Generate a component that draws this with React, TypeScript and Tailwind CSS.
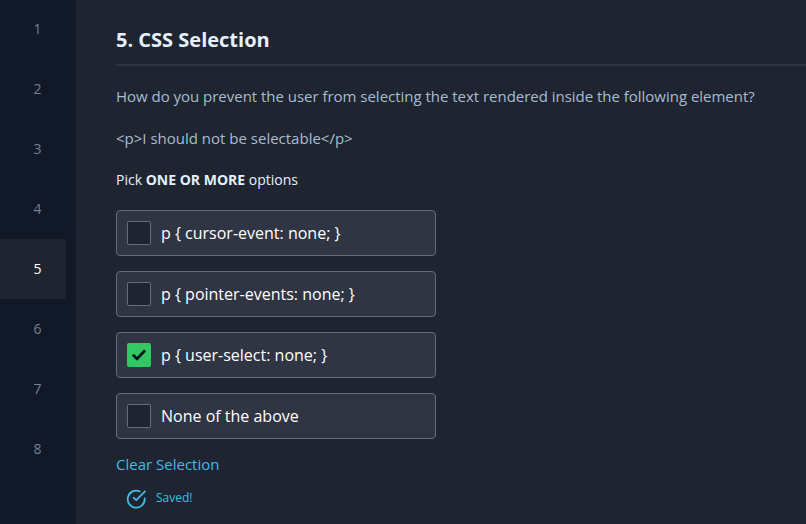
const questions = [1, 2, 3, 4, 5, 6, 7, 8];

const options = [
  { label: "p { cursor-event: none; }", checked: false },
  { label: "p { pointer-events: none; }", checked: false },
  { label: "p { user-select: none; }", checked: true },
  { label: "None of the above", checked: false },
];

function Sidebar({ active }: { active: number }) {
  return (
    <nav className="-mt-px flex w-[76px] shrink-0 flex-col bg-[#111827] pr-2.5">
      {questions.map((n) => (
        <a
          key={n}
          className={
            n === active
              ? "flex h-[60px] shrink-0 items-center justify-center bg-[#1e2531] pl-[9px] text-sm font-medium text-white"
              : "flex h-[60px] shrink-0 items-center justify-center pl-[9px] text-sm text-[#718096]"
          }
        >
          {n}
        </a>
      ))}
    </nav>
  );
}

function Option({ label, checked }: { label: string; checked: boolean }) {
  return (
    <label className="flex h-[46px] w-80 items-center gap-2.5 rounded border border-[#656c78] bg-[#2f3542] pl-2.5 text-base text-white">
      <span
        className={
          checked
            ? "flex size-6 items-center justify-center rounded-[2px] bg-[#31c865]"
            : "flex size-6 items-center justify-center rounded-[2px] border border-[#656c78] bg-[#1e2531]"
        }
      >
        {checked && (
          <svg width="14" height="12" viewBox="0 0 14 12" fill="none" stroke="#0b1220" strokeWidth="2.8" strokeLinecap="round" strokeLinejoin="round">
            <path d="M1.7 6.5 5.1 9.9 12.2 2.3" />
          </svg>
        )}
      </span>
      {label}
    </label>
  );
}

export default function App() {
  return (
    <div className="flex h-[524px] w-[806px] overflow-hidden bg-[#1e2531] font-['Open_Sans','Noto_Sans',sans-serif]">
      <Sidebar active={5} />
      <main className="flex min-w-0 flex-1 flex-col items-start pl-10">
        <h1 className="w-full border-b-2 border-[#2d3440] pt-[25px] pb-[9px] text-xl leading-[30px] font-bold text-[#e6f0fc]">
          5. CSS Selection
        </h1>
        <p className="mt-[18px] text-[15px] leading-6 tracking-[-0.022px] whitespace-nowrap text-[#a9bccf]">
          How do you prevent the user from selecting the text rendered inside the following element?
        </p>
        <p className="mt-[18px] text-[15px] leading-6 text-[#a9bccf]">{"<p>I should not be selectable</p>"}</p>
        <p className="mt-5 text-sm leading-5 text-[#e6f0fc]">
          Pick <strong className="font-bold">ONE OR MORE</strong> options
        </p>
        <div className="mt-5 flex flex-col gap-[15px]">
          {options.map((o) => (
            <Option key={o.label} {...o} />
          ))}
        </div>
        <button className="mt-[13px] text-[15px] leading-6 text-[#41bce2]">Clear Selection</button>
        <div className="mt-[11px] flex items-center gap-2.5 pl-2.5 text-xs text-[#41bce2]">
          <svg className="mt-0.5" width="20" height="20" viewBox="0 0 20 20" fill="none" stroke="currentColor" strokeWidth="1.8" strokeLinecap="round" strokeLinejoin="round">
            <path d="M18.7 9.3v.9a8.5 8.5 0 1 1-5-7.8" />
            <path d="M19 2.3 10.2 11.2 7.6 8.6" />
          </svg>
          Saved!
        </div>
      </main>
    </div>
  );
}
